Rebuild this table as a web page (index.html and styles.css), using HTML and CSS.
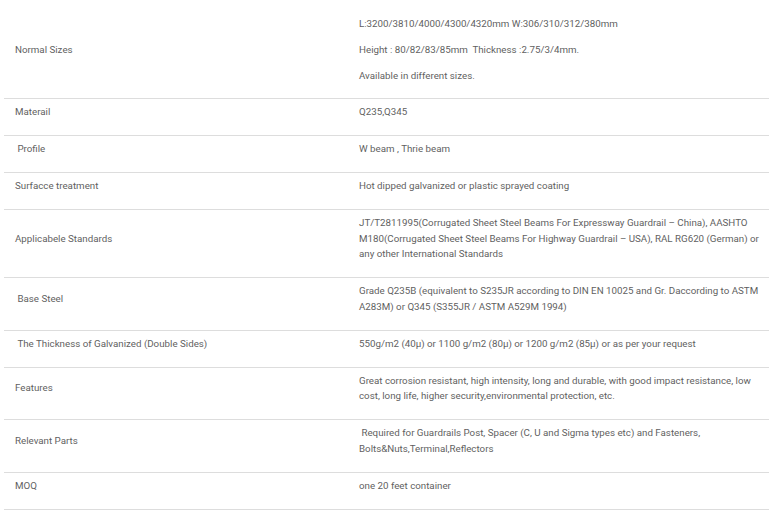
FILE: index.html
```html
<!DOCTYPE html>
<html>
<head>
<meta charset="utf-8">
<link rel="stylesheet" href="styles.css">
</head>
<body>
<table class="spec">
  <colgroup><col class="c1"><col class="c2"></colgroup>
  <tbody>
    <tr>
      <td><p>Normal Sizes</p></td>
      <td><p>L:3200/3810/4000/4300/4320mm W:306/310/312/380mm</p><p>Height : 80/82/83/85mm&nbsp; Thickness :2.75/3/4mm.</p><p>Available in different sizes.</p></td>
    </tr>
    <tr>
      <td><p>Materail</p></td>
      <td><p>Q235,Q345</p></td>
    </tr>
    <tr>
      <td><p>&nbsp;Profile</p></td>
      <td><p>W beam , Thrie beam</p></td>
    </tr>
    <tr>
      <td><p>Surfacce treatment</p></td>
      <td><p>Hot dipped galvanized or plastic sprayed coating</p></td>
    </tr>
    <tr>
      <td><p>Applicabele Standards</p></td>
      <td><p>JT/T2811995(Corrugated Sheet Steel Beams For Expressway Guardrail – China), AASHTO M180(Corrugated Sheet Steel Beams For Highway Guardrail – USA), RAL RG620 (German) or any other International Standards</p></td>
    </tr>
    <tr>
      <td><p>&nbsp;Base Steel</p></td>
      <td><p>Grade Q235B (equivalent to S235JR according to DIN EN 10025 and Gr. Daccording to ASTM A283M) or Q345 (S355JR / ASTM A529M 1994)</p></td>
    </tr>
    <tr>
      <td><p>&nbsp;The Thickness of Galvanized (Double Sides)</p></td>
      <td><p>550g/m2 (40μ) or 1100 g/m2 (80μ) or 1200 g/m2 (85μ) or as per your request</p></td>
    </tr>
    <tr>
      <td><p>Features</p></td>
      <td><p>Great corrosion resistant, high intensity, long and durable, with good impact resistance, low cost, long life, higher security,environmental protection, etc.</p></td>
    </tr>
    <tr>
      <td><p>Relevant Parts</p></td>
      <td><p>&nbsp;Required for Guardrails Post, Spacer (C, U and Sigma types etc) and Fasteners, Bolts&amp;Nuts,Terminal,Reflectors</p></td>
    </tr>
    <tr>
      <td><p>MOQ</p></td>
      <td><p>one 20 feet container</p></td>
    </tr>
  </tbody>
</table>
</body>
</html>
```
FILE: styles.css
```css
html, body {
  margin: 0;
  padding: 0;
  background: #fff;
}
body {
  font-family: Roboto, "Liberation Sans", sans-serif;
  font-size: 9.75px;
  color: #5f5f5f;
}
.spec {
  border-collapse: collapse;
  table-layout: fixed;
  width: 765px;
  margin: 11px 0 0 4px;
}
.spec .c1 { width: 344px; }
.spec td {
  vertical-align: middle;
  padding: 5px 6px 5px 11px;
  border-bottom: 1px solid #dddddd;
}
.spec p {
  margin: 0 0 10px;
  line-height: 15.8px;
}
```
